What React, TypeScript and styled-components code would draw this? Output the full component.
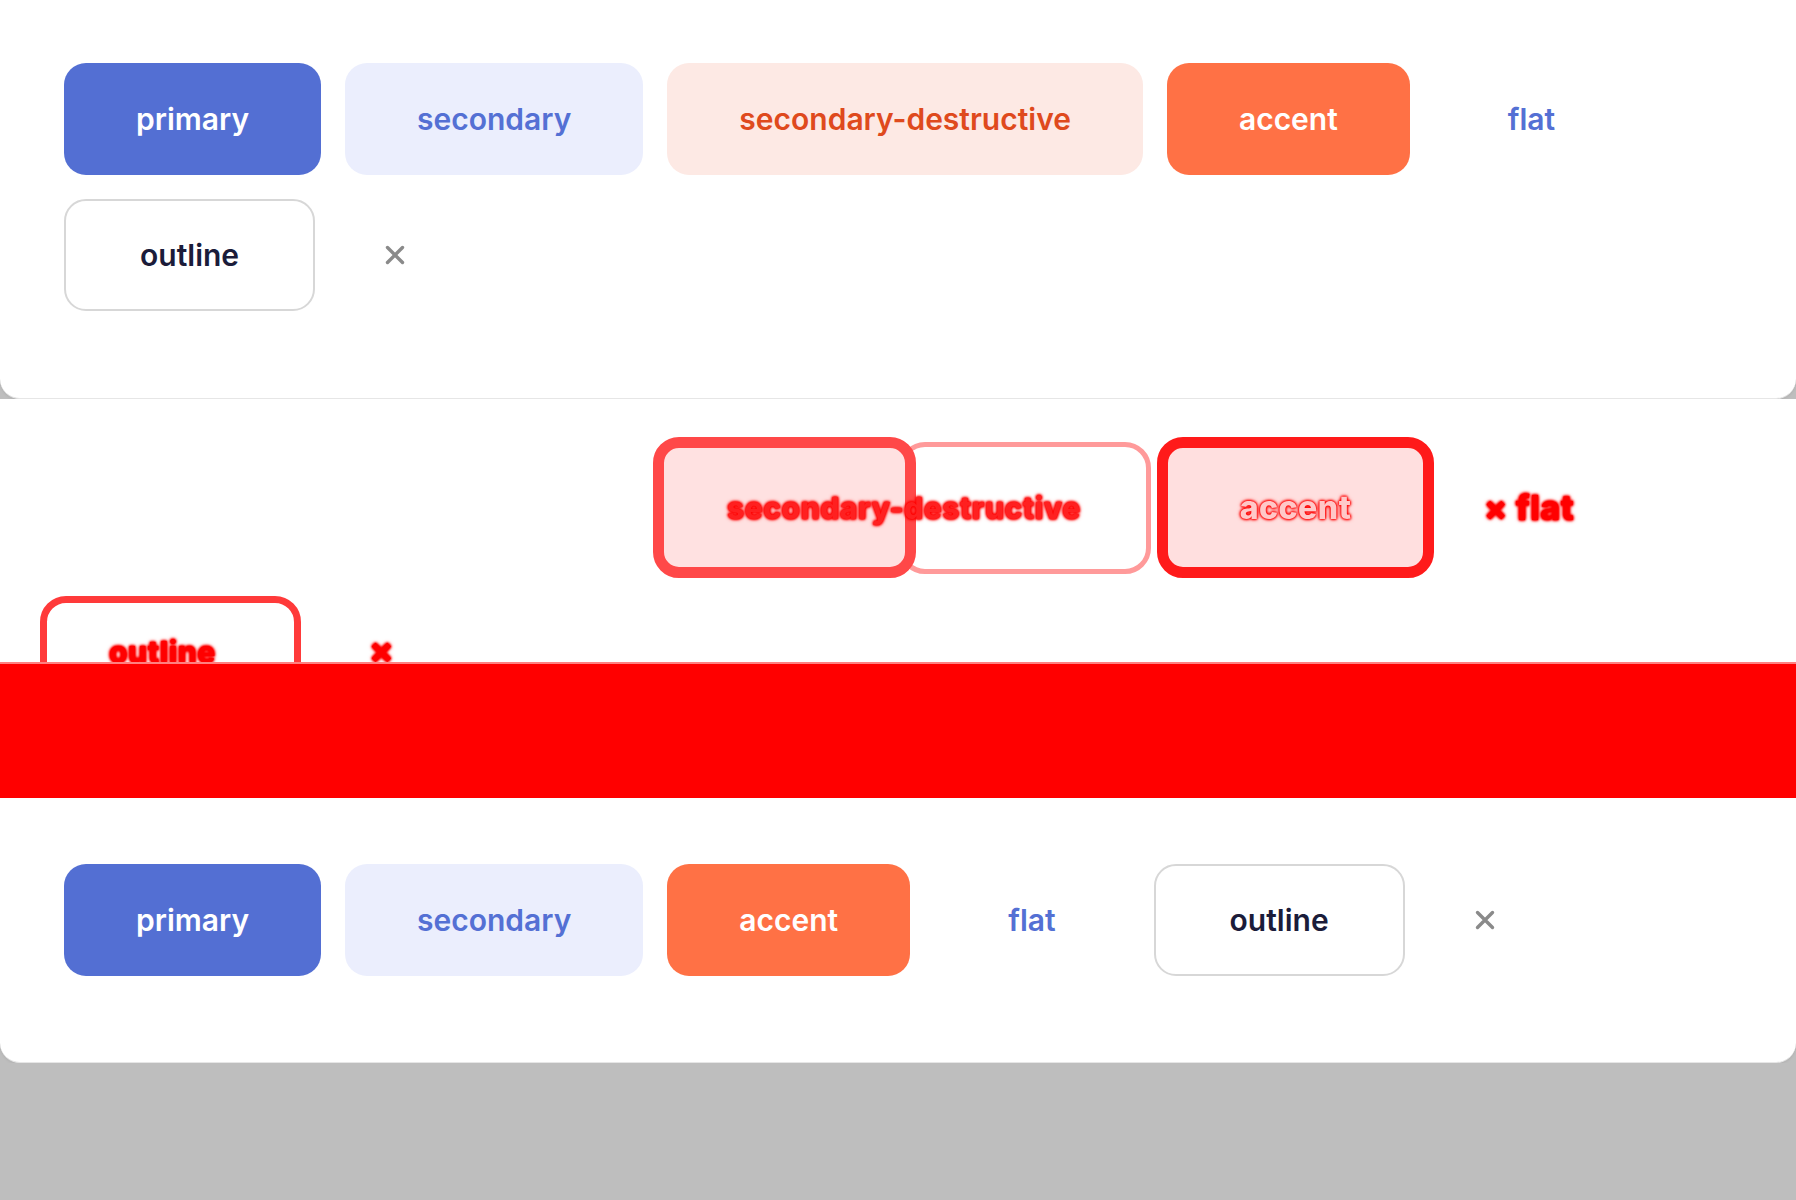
import React from "react";
import styled, { createGlobalStyle, css } from "styled-components";

const GlobalStyle = createGlobalStyle`
  html, body {
    margin: 0;
    padding: 0;
  }
  body {
    background: #bebebe;
    font-family: Inter, "Noto Sans", sans-serif;
  }
`;

type Variant =
  | "primary"
  | "secondary"
  | "secondary-destructive"
  | "accent"
  | "flat"
  | "outline";

const variants = {
  primary: css`
    background: #536fd3;
    color: #ffffff;
  `,
  secondary: css`
    background: #ebeefd;
    color: #5470d4;
  `,
  "secondary-destructive": css`
    background: #fde9e4;
    color: #df4a1d;
  `,
  accent: css`
    background: #ff7145;
    color: #ffffff;
  `,
  flat: css`
    background: transparent;
    color: #5470d4;
    padding: 0 74px;
  `,
  outline: css`
    background: #ffffff;
    color: #1b1c3a;
    border: 2px solid #d7d7d7;
    padding: 0 74px;
  `,
};

const Page = styled.div`
  display: flex;
  flex-direction: column;
`;

const Card = styled.section<{ $pt: number; $pb: number }>`
  background: #ffffff;
  padding: ${(p) => p.$pt}px 64px ${(p) => p.$pb}px;
  border-radius: 0 0 20px 20px;
  border-bottom: 1px solid #e6e6e6;
  box-shadow: 0 1px 3px rgba(0, 0, 0, 0.08);
`;

const ButtonRow = styled.div`
  display: flex;
  flex-wrap: wrap;
  gap: 24px;
`;

const Button = styled.button<{ $variant: Variant }>`
  display: inline-flex;
  align-items: center;
  justify-content: center;
  box-sizing: border-box;
  height: 112px;
  padding: 0 72px;
  border: none;
  border-radius: 22px;
  font-family: Inter, "Noto Sans", sans-serif;
  font-size: 30px;
  font-weight: 600;
  cursor: pointer;
  ${(p) => variants[p.$variant]}
`;

const IconButton = styled.button`
  display: inline-flex;
  align-items: center;
  justify-content: center;
  width: 112px;
  height: 112px;
  padding: 0;
  border: none;
  background: transparent;
  cursor: pointer;
`;

const CloseIcon = () => (
  <svg width="20" height="20" viewBox="0 0 20 20" fill="none">
    <path d="M2.5 2.5 L17.5 17.5 M17.5 2.5 L2.5 17.5" stroke="#8a8a8a" strokeWidth="3.4" strokeLinecap="round" />
  </svg>
);

/* diff overlay between the two cards */
const DiffArea = styled.div`
  box-sizing: border-box;
  height: 263px;
  padding-top: 38px;
  background: #ffffff;
  overflow: hidden;
  display: flex;
  flex-direction: column;
`;

const DiffRow = styled.div<{ $left: number; $top?: number; $align?: string }>`
  display: flex;
  align-items: ${(p) => p.$align ?? "center"};
  padding-left: ${(p) => p.$left}px;
  margin-top: ${(p) => p.$top ?? 0}px;
`;

const GhostBox = styled.div<{
  $w: number;
  $h: number;
  $border: number;
  $stroke: string;
  $fill: string;
  $shift?: number;
  $z?: number;
  $justify?: string;
  $align?: string;
}>`
  position: relative;
  z-index: ${(p) => p.$z ?? 1};
  box-sizing: border-box;
  flex: none;
  display: flex;
  align-items: ${(p) => p.$align ?? "center"};
  justify-content: ${(p) => p.$justify ?? "flex-start"};
  white-space: nowrap;
  width: ${(p) => p.$w}px;
  height: ${(p) => p.$h}px;
  margin-left: ${(p) => p.$shift ?? 0}px;
  border: ${(p) => p.$border}px solid ${(p) => p.$stroke};
  background: ${(p) => p.$fill};
  border-radius: 26px;
  filter: blur(0.7px);
`;

const GhostText = styled.span<{ $fill: string; $pad?: number; $size?: number; $gapLeft?: number; $gapTop?: number }>`
  position: relative;
  z-index: 2;
  padding-left: ${(p) => p.$pad ?? 0}px;
  margin-left: ${(p) => p.$gapLeft ?? 0}px;
  margin-top: ${(p) => p.$gapTop ?? 0}px;
  font-family: Inter, sans-serif;
  font-size: ${(p) => p.$size ?? 30}px;
  font-weight: 800;
  letter-spacing: 0.5px;
  color: ${(p) => p.$fill};
  text-shadow: 0 0 3px #ff0000, 0 0 3px #ff0000, 0 0 4px #ff0000, 0 0 2px #ff0000;
  filter: blur(0.5px);
`;

const DiffBand = styled.div`
  height: 136px;
  background: #ff0000;
  border-top: 2px solid #ff8080;
  box-sizing: border-box;
`;

export default function App() {
  return (
    <Page>
      <GlobalStyle />
      <Card $pt={63} $pb={87}>
        <ButtonRow>
          <Button $variant="primary">primary</Button>
          <Button $variant="secondary">secondary</Button>
          <Button $variant="secondary-destructive">secondary-destructive</Button>
          <Button $variant="accent">accent</Button>
          <Button $variant="flat">flat</Button>
          <Button $variant="outline">outline</Button>
          <IconButton aria-label="close">
            <CloseIcon />
          </IconButton>
        </ButtonRow>
      </Card>

      <DiffArea>
        <DiffRow $left={653}>
          <GhostBox $w={263} $h={141} $border={11} $stroke="#ff4848" $fill="#ffe1e1" $z={3}>
            <GhostText $fill="#ff2020" $pad={63}>secondary-destructive</GhostText>
          </GhostBox>
          <GhostBox $w={252} $h={132} $border={5} $stroke="#ff9a9a" $fill="#ffffff" $shift={-17} />
          <GhostBox
            $w={277}
            $h={141}
            $border={11}
            $stroke="#ff1a1a"
            $fill="#ffdfdf"
            $shift={6}
            $justify="center"
          >
            <GhostText $fill="#ffc8c8" $size={32}>accent</GhostText>
          </GhostBox>
          <GhostText $fill="#ff0000" $size={34} $gapLeft={50}>
            × flat
          </GhostText>
        </DiffRow>
        <DiffRow $left={40} $top={18} $align="flex-start">
          <GhostBox
            $w={261}
            $h={130}
            $border={7}
            $stroke="#ff3a3a"
            $fill="#ffffff"
            $align="flex-start"
          >
            <GhostText $fill="#ff0000" $pad={62} $gapTop={31}>
              outline
            </GhostText>
          </GhostBox>
          <GhostText $fill="#ff0000" $size={36} $gapLeft={68} $gapTop={32}>
            ×
          </GhostText>
        </DiffRow>
      </DiffArea>
      <DiffBand />

      <Card $pt={66} $pb={86}>
        <ButtonRow>
          <Button $variant="primary">primary</Button>
          <Button $variant="secondary">secondary</Button>
          <Button $variant="accent">accent</Button>
          <Button $variant="flat">flat</Button>
          <Button $variant="outline">outline</Button>
          <IconButton aria-label="close">
            <CloseIcon />
          </IconButton>
        </ButtonRow>
      </Card>
    </Page>
  );
}
